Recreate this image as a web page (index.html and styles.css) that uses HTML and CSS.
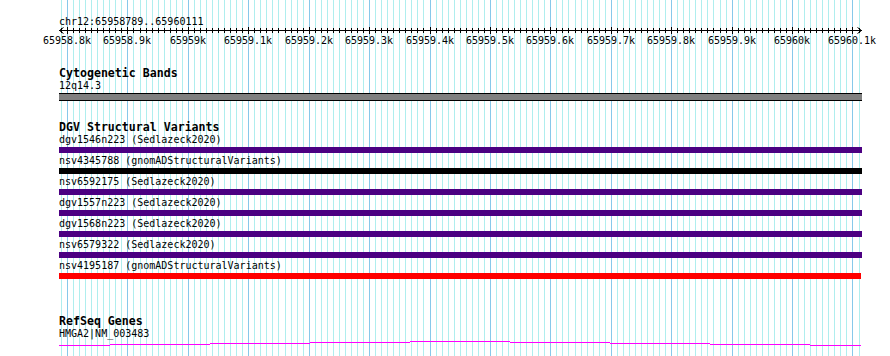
FILE: index.html
```html
<!DOCTYPE html>
<html lang="en">
<head>
  <meta charset="UTF-8">
  <title>Genome View</title>
  <link rel="stylesheet" href="styles.css">
</head>
<body>
  <div class="view">
    <svg class="grid" id="grid" width="890" height="356"></svg>

    <div class="tracks">
      <div class="location">chr12:65958789..65960111</div>

      <div class="ruler">
        <svg class="ruler-axis" id="axis" width="803" height="8"></svg>
        <div class="ruler-labels" id="rulerLabels"></div>
      </div>

      <div class="track">
        <div class="track-title">Cytogenetic Bands</div>
        <div class="feature-label">12q14.3</div>
        <div class="band"></div>
      </div>

      <div class="track track-dgv">
        <div class="track-title">DGV Structural Variants</div>
        <div class="features">
          <div class="feature">
            <div class="feature-label">dgv1546n223 (Sedlazeck2020)</div>
            <div class="bar bar-loss"></div>
          </div>
          <div class="feature">
            <div class="feature-label">nsv4345788 (gnomADStructuralVariants)</div>
            <div class="bar bar-complex"></div>
          </div>
          <div class="feature">
            <div class="feature-label">nsv6592175 (Sedlazeck2020)</div>
            <div class="bar bar-loss"></div>
          </div>
          <div class="feature">
            <div class="feature-label">dgv1557n223 (Sedlazeck2020)</div>
            <div class="bar bar-loss"></div>
          </div>
          <div class="feature">
            <div class="feature-label">dgv1568n223 (Sedlazeck2020)</div>
            <div class="bar bar-loss"></div>
          </div>
          <div class="feature">
            <div class="feature-label">nsv6579322 (Sedlazeck2020)</div>
            <div class="bar bar-loss"></div>
          </div>
          <div class="feature">
            <div class="feature-label">nsv4195187 (gnomADStructuralVariants)</div>
            <div class="bar bar-del"></div>
          </div>
        </div>
      </div>

      <div class="track">
        <div class="track-title">RefSeq Genes</div>
        <div class="feature-label">HMGA2|NM_003483</div>
        <svg class="gene" id="gene" width="803" height="6"></svg>
      </div>
    </div>
  </div>

  <script>
    // view: 65958789..65960111, 65958800 sits at x=67
    const ORIGIN_BP = 65958800;
    const ORIGIN_X = 67;
    const PX_PER_BP = 0.6042;
    const LEFT = 59;
    const NS = 'http://www.w3.org/2000/svg';

    function bpToX(bp) {
      return Math.round(ORIGIN_X + (bp - ORIGIN_BP) * PX_PER_BP);
    }

    function rect(svg, x, y, w, h, cls) {
      const r = document.createElementNS(NS, 'rect');
      r.setAttribute('x', x);
      r.setAttribute('y', y);
      r.setAttribute('width', w);
      r.setAttribute('height', h);
      r.setAttribute('class', cls);
      svg.appendChild(r);
    }

    const grid = document.getElementById('grid');
    const axis = document.getElementById('axis');
    const labels = document.getElementById('rulerLabels');

    for (let bp = 65958790; bp <= 65960110; bp += 10) {
      const x = bpToX(bp);
      const major = bp % 100 === 0;
      rect(grid, x, 0, 1, 356, major ? 'grid-major' : 'grid-minor');
      rect(axis, x - LEFT, major ? 0 : 1, 1, major ? 7 : 5, 'tick');

      if (major) {
        const label = document.createElement('span');
        label.className = 'ruler-label';
        label.style.left = (x - LEFT) + 'px';
        const k = (bp / 1000).toString();
        label.textContent = k + 'k';
        labels.appendChild(label);
      }
    }

    // axis line with arrow heads
    rect(axis, 0, 3, 803, 1, 'tick');
    const arrows = document.createElementNS(NS, 'path');
    arrows.setAttribute('d', 'M4.5 0.5 L0.5 3.5 L4.5 6.5 M798.5 0.5 L802.5 3.5 L798.5 6.5');
    arrows.setAttribute('class', 'arrow');
    axis.appendChild(arrows);

    // gene intron line, stepped
    const gene = document.getElementById('gene');
    const steps = [
      [59, 110, 5], [110, 210, 4], [210, 310, 3], [310, 410, 2], [410, 510, 1],
      [510, 610, 2], [610, 710, 3], [710, 810, 4], [810, 861, 5]
    ];
    steps.forEach(s => rect(gene, s[0] - LEFT, s[2], s[1] - s[0], 1, 'intron'));
  </script>
</body>
</html>
```

FILE: styles.css
```css
body {
  margin: 0;
  padding: 0;
  background: #ffffff;
}

.view {
  position: relative;
  width: 890px;
  height: 356px;
  overflow: hidden;
  font-family: 'DejaVu Sans Mono', 'Liberation Mono', monospace;
  font-size: 10px;
  color: #000000;
}

.grid {
  position: absolute;
  top: 0;
  left: 0;
}

.grid-minor {
  fill: #afeeee;
}

.grid-major {
  fill: #87c8ea;
}

.tracks {
  position: relative;
  width: 803px;
  padding-left: 59px;
}

.location {
  padding-top: 17px;
  line-height: 10px;
  white-space: nowrap;
}

.ruler-axis {
  display: block;
}

.tick {
  fill: #000000;
}

.arrow {
  fill: none;
  stroke: #000000;
  stroke-width: 1;
}

.ruler-labels {
  position: relative;
  height: 12px;
  line-height: 12px;
}

.ruler-label {
  position: absolute;
  top: 0;
  transform: translateX(-50%);
  white-space: nowrap;
}

.track {
  margin-top: 20px;
}

.track-dgv {
  padding-bottom: 16px;
}

.track-title {
  font-size: 11.6px;
  font-weight: bold;
  line-height: 13px;
  white-space: nowrap;
}

.feature-label {
  line-height: 12px;
  white-space: nowrap;
}

.band {
  margin-top: 1px;
  height: 6px;
  background-color: #808080;
  border-top: 1px solid #000000;
  border-bottom: 1px solid #000000;
}

.features {
  display: flex;
  flex-direction: column;
  gap: 2px;
}

.bar {
  margin-top: 1px;
  height: 6px;
}

.bar-loss {
  background-color: #4b0082;
}

.bar-complex {
  background-color: #000000;
}

.bar-del {
  background-color: #ff0000;
  width: 802px;
}

.gene {
  display: block;
}

.intron {
  fill: #ff00ff;
}
```
